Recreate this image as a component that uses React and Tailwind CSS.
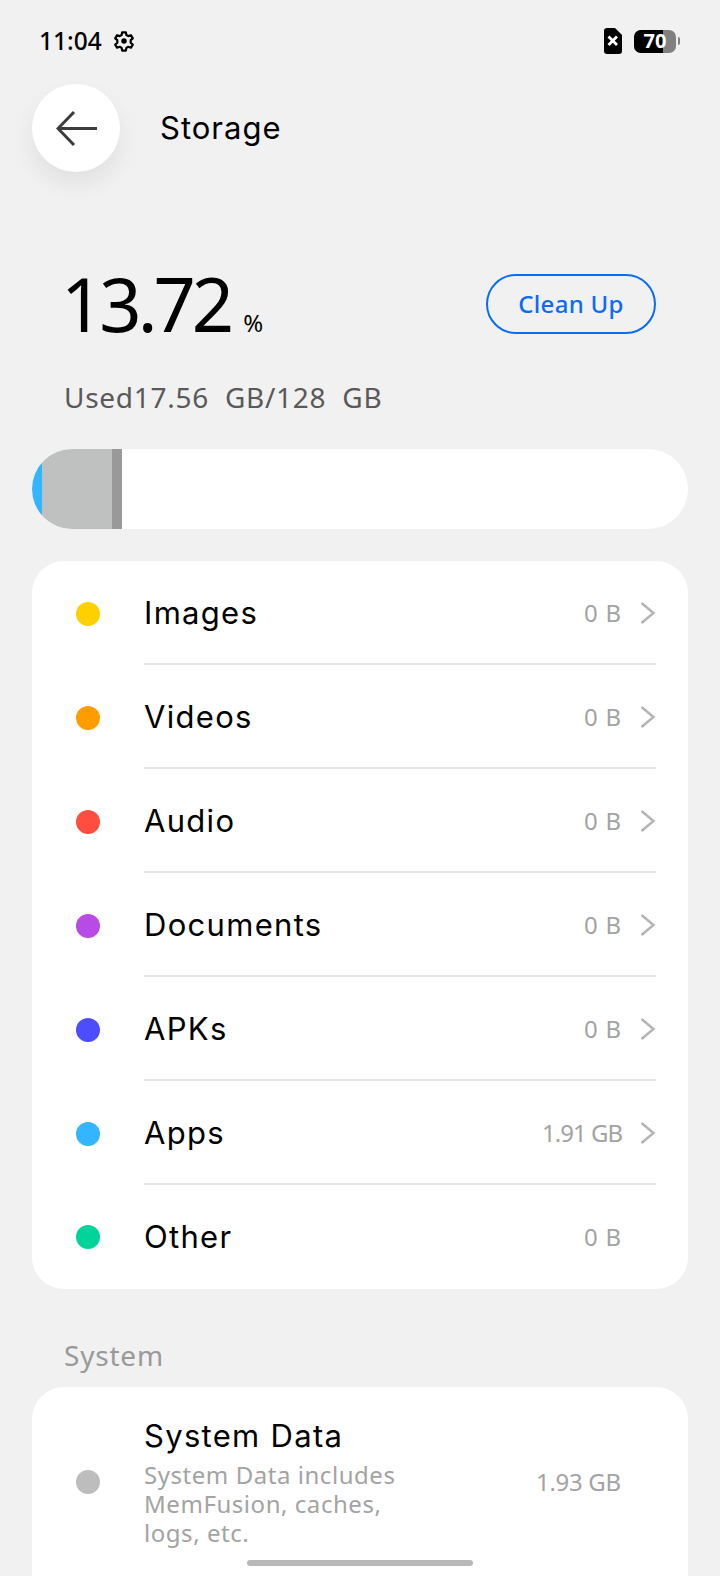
import React from "react";

const rows = [
  ["Images", "0 B", "bg-[#ffd000]", true],
  ["Videos", "0 B", "bg-[#ff9d00]", true],
  ["Audio", "0 B", "bg-[#ff4d40]", true],
  ["Documents", "0 B", "bg-[#b84ae6]", true],
  ["APKs", "0 B", "bg-[#4d4dff]", true],
  ["Apps", "1.91 GB", "bg-[#33b5ff]", true],
  ["Other", "0 B", "bg-[#00d49b]", false],
];

function Chevron() {
  return (
    <svg width="16" height="24" viewBox="0 0 16 24" fill="none" stroke="#b3b3b3" strokeWidth="2.4">
      <path d="M1.500 2 L13.500 12 L1.500 22" />
    </svg>
  );
}

function Row({ label, value, color, chevron, last }) {
  return (
    <div className="flex h-[104px] items-center">
      <div className={`ml-[44px] h-6 w-6 rounded-full ${color} ${last ? "" : "mt-[2px]"}`} />
      <div className={`ml-[44px] mr-8 flex h-full flex-1 items-center ${last ? "" : "border-b-2 border-[#e6e6e6] pt-[2px]"}`}>
        <span className="flex-1 font-['Inter',sans-serif] text-[31px] tracking-[1.3px] text-black">{label}</span>
        <span className={`text-[24px] text-[#a3a3a3] ${value.length > 3 ? "tracking-[-1px]" : "tracking-[0.8px]"}`}>{value}</span>
        <div className="ml-[18px] flex w-4 justify-end">{chevron && <Chevron />}</div>
      </div>
    </div>
  );
}

export default function App() {
  return (
    <div className="relative h-[1576px] w-[720px] overflow-hidden bg-[#f1f1f1] font-['Noto_Sans',sans-serif]">
      <div className="flex h-[84px] items-center pb-[2px] pl-[39px] pr-[40px]">
        <span className="text-[24.500px] font-medium leading-none text-black">11:04</span>
        <svg className="ml-[11px]" width="22" height="22" viewBox="0 0 24 24" fill="none" stroke="#000" strokeWidth="2.4" strokeLinejoin="round">
          <path d="M10 2.500h4l.6 3 2.100 1.200 2.900-1 2 3.400-2.300 2v2.800l2.300 2-2 3.400-2.900-1-2.100 1.200-.6 3h-4l-.6-3-2.100-1.200-2.900 1-2-3.400 2.300-2v-2.800l-2.300-2 2-3.400 2.900 1 2.100-1.200z" />
          <circle cx="12" cy="12" r="3" fill="#000" stroke="none" />
        </svg>
        <div className="flex-1" />
        <svg className="mr-[1px]" width="18" height="26" viewBox="0 0 18 26">
          <path d="M3 0h8l7 7v16a3 3 0 0 1-3 3H3a3 3 0 0 1-3-3V3a3 3 0 0 1 3-3z" fill="#000" />
          <path d="M4.500 8.500l8.500 8.500M13 8.500l-8.500 8.500" stroke="#fff" strokeWidth="2.800" />
        </svg>
        <div className="relative ml-[11px] flex h-[23px] w-[42px] items-center justify-center rounded-[7px] bg-[#808080]">
          <div className="absolute inset-y-0 left-0 w-[29px] rounded-l-[7px] bg-black" />
          <span className="relative text-[20px] font-bold leading-none text-white">70</span>
        </div>
        <div className="ml-[2px] h-[8px] w-[2px] rounded-r-sm bg-[#808080]" />
      </div>

      <div className="flex items-center pl-8">
        <div className="flex h-[88px] w-[88px] items-center justify-center rounded-full bg-white shadow-[0_12px_24px_rgba(0,0,0,0.07)]">
          <svg width="41" height="37" viewBox="0 0 41 37" fill="none" stroke="#3c3c3c" strokeWidth="3">
            <path d="M18 2 L2 18.500 L18 35 M2 18.500 H41" />
          </svg>
        </div>
        <span className="ml-10 font-['Inter',sans-serif] text-[31px] tracking-[1px] text-black">Storage</span>
      </div>

      <div className="mt-[92px] flex items-center pl-16 pr-16">
        <div className="flex flex-1 items-baseline">
          <span className="ml-[-3px] text-[74px] leading-[80px] tracking-[-4px] text-black">13.72</span>
          <span className="ml-[13px] text-[24px] text-black">%</span>
        </div>
        <button className="h-[60px] w-[170px] rounded-full border-2 border-[#0a6cf5] text-[24px] font-medium tracking-[0.3px] text-[#0a6cf5]">
          Clean Up
        </button>
      </div>

      <div className="mt-[33px] pl-16 text-[28px] leading-[40px] tracking-[0.72px] text-[#595959]">
        Used17.56&nbsp; GB/128&nbsp; GB
      </div>

      <div className="mx-8 mt-[32px] flex h-20 overflow-hidden rounded-[40px] bg-white">
        <div className="w-[10px] bg-[#33b5ff]" />
        <div className="w-[70px] bg-[#bfc0c0]" />
        <div className="w-[10px] bg-[#999999]" />
      </div>

      <div className="mx-8 mt-8 rounded-[32px] bg-white">
        {rows.map(([l, v, c, ch], i) => (
          <Row key={l} label={l} value={v} color={c} chevron={ch} last={i === rows.length - 1} />
        ))}
      </div>

      <div className="mt-[48px] pl-16 text-[28px] leading-[36px] tracking-[0.8px] text-[#999999]">System</div>

      <div className="mx-8 mt-[14px] flex h-[240px] rounded-t-[32px] bg-white pt-[27px]">
        <div className="ml-[44px] mt-[56px] h-6 w-6 rounded-full bg-[#bdbdbd]" />
        <div className="ml-[44px] w-[275px]">
          <div className="font-['Inter',sans-serif] text-[31px] leading-[44px] tracking-[1.3px] text-black">System Data</div>
          <div className="mt-[2px] text-[24px] leading-[29px] tracking-[0.55px] text-[#a3a3a3]">
            System Data includes MemFusion, caches, logs, etc.
          </div>
        </div>
        <div className="ml-[117px] mt-[50px] h-fit text-[24px] leading-[36px] tracking-[-0.3px] text-[#a3a3a3]">1.93 GB</div>
      </div>

      <div className="absolute bottom-[10px] left-[247px] h-[6px] w-[226px] rounded-full bg-[#b8b8b8]" />
    </div>
  );
}
